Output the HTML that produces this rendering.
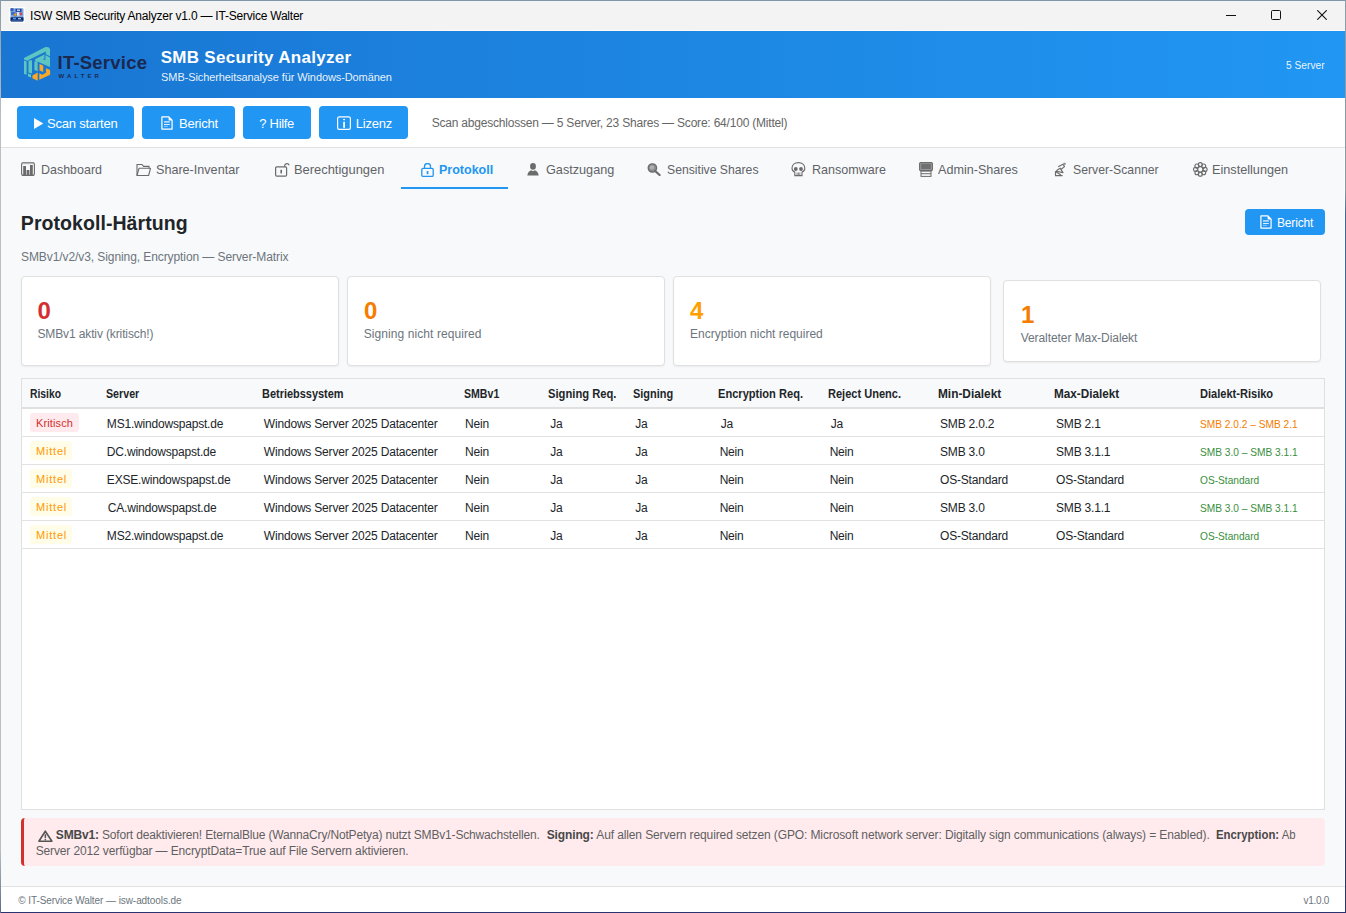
<!DOCTYPE html>
<html><head><meta charset="utf-8"><title>ISW SMB Security Analyzer</title>
<style>
html,body{margin:0;padding:0;}
body{width:1346px;height:913px;overflow:hidden;position:relative;background:#2b3270;font-family:"Liberation Sans",sans-serif;}
.a{position:absolute;}
.t{position:absolute;white-space:pre;}
</style></head><body>

<div class="a" style="left:0;top:0;width:1346px;height:1px;background:#7f97a8"></div>
<div class="a" style="left:0;top:0;width:1px;height:913px;background:linear-gradient(#8c9aa6 0px,#9aa6ae 40px,#b9bfc4 120px,#b9bfc4 850px,#5a6a8a 913px)"></div>
<div class="a" style="left:1345px;top:0;width:1px;height:913px;background:linear-gradient(#8a9ca6 0px,#8a9ca6 190px,#3b63a6 215px,#3b63a6 500px,#2b3270 800px)"></div>
<div class="a" style="left:1px;top:1px;width:1344px;height:29px;background:#f3f3f3"></div>
<div class="a" style="left:1px;top:30px;width:1344px;height:1px;background:#fbfaf7"></div>
<div class="a" style="left:1px;top:31px;width:1344px;height:67px;background:linear-gradient(90deg,#1976d2,#2196f3)"></div>
<div class="a" style="left:1px;top:98px;width:1344px;height:49px;background:#fff"></div>
<div class="a" style="left:1px;top:147px;width:1344px;height:1px;background:#e0e0e0"></div>
<div class="a" style="left:1px;top:148px;width:1343px;height:738px;background:#f8f9fa"></div>
<div class="a" style="left:1344px;top:148px;width:1px;height:738px;background:#fff"></div>
<div class="a" style="left:1px;top:886px;width:1344px;height:1px;background:#e2e2e2"></div>
<div class="a" style="left:1px;top:887px;width:1344px;height:25px;background:#fff"></div>
<!-- buttons -->
<div class="a" style="left:17px;top:106px;width:117px;height:33px;background:#2196f3;border-radius:4px"></div>
<div class="a" style="left:142px;top:106px;width:93px;height:33px;background:#2196f3;border-radius:4px"></div>
<div class="a" style="left:243px;top:106px;width:68px;height:33px;background:#2196f3;border-radius:4px"></div>
<div class="a" style="left:319px;top:106px;width:89px;height:33px;background:#2196f3;border-radius:4px"></div>
<!-- active tab underline -->
<div class="a" style="left:401px;top:187px;width:107px;height:2px;background:#2196f3"></div>
<!-- bericht btn -->
<div class="a" style="left:1245px;top:209px;width:80px;height:26px;background:#2196f3;border-radius:4px"></div>
<!-- cards -->
<div class="a" style="left:21px;top:276px;width:316px;height:88px;background:#fff;border:1px solid #e0e0e0;border-radius:4px;box-shadow:0 1px 2px rgba(0,0,0,0.06)"></div>
<div class="a" style="left:347px;top:276px;width:316px;height:88px;background:#fff;border:1px solid #e0e0e0;border-radius:4px;box-shadow:0 1px 2px rgba(0,0,0,0.06)"></div>
<div class="a" style="left:673px;top:276px;width:316px;height:88px;background:#fff;border:1px solid #e0e0e0;border-radius:4px;box-shadow:0 1px 2px rgba(0,0,0,0.06)"></div>
<div class="a" style="left:1003px;top:280px;width:316px;height:80px;background:#fff;border:1px solid #e0e0e0;border-radius:4px;box-shadow:0 1px 2px rgba(0,0,0,0.06)"></div>
<!-- table -->
<div class="a" style="left:21px;top:378px;width:1302px;height:430px;background:#fff;border:1px solid #e0e0e0"></div>
<div class="a" style="left:22px;top:379px;width:1302px;height:28px;background:#f8f9fa"></div>
<div class="a" style="left:22px;top:407px;width:1302px;height:2px;background:#e0e0e0"></div>
<div class="a" style="left:22px;top:436px;width:1302px;height:1px;background:#e2e2e2"></div>
<div class="a" style="left:22px;top:464px;width:1302px;height:1px;background:#e2e2e2"></div>
<div class="a" style="left:22px;top:492px;width:1302px;height:1px;background:#e2e2e2"></div>
<div class="a" style="left:22px;top:520px;width:1302px;height:1px;background:#e2e2e2"></div>
<div class="a" style="left:22px;top:548px;width:1302px;height:1px;background:#e2e2e2"></div>
<!-- badges -->
<div class="a" style="left:30px;top:413px;width:49px;height:19px;background:#ffebee;border-radius:3px"></div>
<div class="a" style="left:30px;top:441px;width:42px;height:19px;background:#fffde7;border-radius:3px"></div>
<div class="a" style="left:30px;top:469px;width:42px;height:19px;background:#fffde7;border-radius:3px"></div>
<div class="a" style="left:30px;top:497px;width:42px;height:19px;background:#fffde7;border-radius:3px"></div>
<div class="a" style="left:30px;top:525px;width:42px;height:19px;background:#fffde7;border-radius:3px"></div>
<!-- alert -->
<div class="a" style="left:21px;top:818px;width:1301px;height:48px;background:#ffebee;border-left:3px solid #d32f2f;border-radius:4px"></div>
<svg class="a" style="left:9px;top:7px" width="16" height="16" viewBox="0 0 16 16"><rect x="0" y="0" width="16" height="16" fill="#fdfdfd"/>
<rect x="1.5" y="1.2" width="13" height="13.2" rx="1.2" fill="#7fa8dc"/>
<rect x="1.5" y="1.2" width="3" height="3" fill="#2d5db8"/>
<rect x="6.5" y="1.8" width="6" height="3" fill="#1c3f9a"/><rect x="8" y="2.6" width="3" height="1.2" fill="#e8f0ff"/>
<rect x="2" y="5" width="4" height="3" fill="#3b6fd0"/>
<circle cx="6.3" cy="7.6" r="1.7" fill="#f2a11f" stroke="#2c5fc0" stroke-width="0.6"/>
<rect x="8" y="5.2" width="2.5" height="3.5" fill="#d8e6f7"/>
<circle cx="11.9" cy="6.7" r="1.5" fill="#c8455a"/>
<rect x="1.5" y="10.2" width="13" height="4.2" rx="0.8" fill="#102a6b"/>
<rect x="4" y="10.8" width="3" height="1.5" fill="#5d9ad9"/><rect x="9" y="11" width="3" height="1.3" fill="#9cc2ea"/>
<rect x="2.5" y="12.8" width="11" height="0.8" fill="#3f74c8"/></svg>
<svg class="a" style="left:22px;top:45px" width="32" height="38" viewBox="0 0 32 38"><g fill="#5ec6c0">
<polygon points="2,13 23.5,2 26.5,2.2 28,4 28,11.3 23.8,9.2 23.8,6.4 5,15.8 2,14.6"/>
<polygon points="13,14.3 22.4,9.6 23.8,10.3 28,12.5 28,22 13,15.6"/>
<polygon points="2,15.6 4.6,16.4 4.6,29.8 2,29"/>
<polygon points="6.5,15.6 10,15.2 10,28.6 6.5,27.6"/>
<polygon points="12.4,16.4 15.6,16 15.6,26.2 12.4,25"/>
<polygon points="6,28.6 9,29.6 9,32.4 6,31.4"/>
</g>
<path d="M22.9 9.9 V14.3 H21.2" fill="none" stroke="#1c7ad6" stroke-width="1.1"/>
<g fill="#f9a825">
<polygon points="17.5,19 21.2,20.6 21.2,27 17.5,25.5"/>
<polygon points="10.4,30.5 15.7,27.4 15.7,35.7 10.4,33.2"/>
<polygon points="17.3,28.2 20.3,29.8 24,27.8 24,23.2 28.1,25 28.1,29.8 17.3,34.8"/>
</g></svg>
<svg class="a" style="left:1226px;top:15px" width="10" height="1" viewBox="0 0 10 1"><rect x="0" y="0" width="10" height="1" fill="#111"/></svg>
<svg class="a" style="left:1271px;top:10px" width="10" height="10" viewBox="0 0 10 10"><rect x="0.5" y="0.5" width="9" height="9" rx="1" fill="none" stroke="#111" stroke-width="1"/></svg>
<svg class="a" style="left:1317px;top:10px" width="10" height="10" viewBox="0 0 10 10"><path d="M0.3 0.3 L9.7 9.7 M9.7 0.3 L0.3 9.7" stroke="#111" stroke-width="1.1"/></svg>
<svg class="a" style="left:34px;top:118px" width="10" height="11" viewBox="0 0 10 11"><polygon points="0,0 9.3,5.5 0,11" fill="#fff"/></svg>
<svg class="a" style="left:161px;top:116.2px" width="12" height="14" viewBox="0 0 12 14"><path d="M0.9 0.9 H7.9 L11.1 4.1 V13.1 H0.9 Z" fill="none" stroke="#fff" stroke-width="1.2" stroke-linejoin="round"/>
<path d="M7.6 0.6 L11.4 4.4 H7.6 Z" fill="#fff"/>
<rect x="3" y="5.2" width="5.8" height="1.4" fill="#d4e9fd"/><rect x="3" y="8" width="5.8" height="0.9" fill="#f4faff"/><rect x="3" y="9.9" width="3.8" height="0.8" fill="#a9d5f8"/></svg>
<svg class="a" style="left:1259.6px;top:215.4px" width="12" height="14" viewBox="0 0 12 14"><path d="M0.9 0.9 H7.9 L11.1 4.1 V13.1 H0.9 Z" fill="none" stroke="#fff" stroke-width="1.2" stroke-linejoin="round"/>
<path d="M7.6 0.6 L11.4 4.4 H7.6 Z" fill="#fff"/>
<rect x="3" y="5.2" width="5.8" height="1.4" fill="#d4e9fd"/><rect x="3" y="8" width="5.8" height="0.9" fill="#f4faff"/><rect x="3" y="9.9" width="3.8" height="0.8" fill="#a9d5f8"/></svg>
<svg class="a" style="left:337px;top:116px" width="14" height="14" viewBox="0 0 14 14"><rect x="0.6" y="0.9" width="12.8" height="12.4" rx="1.6" fill="none" stroke="#fff" stroke-width="1.2"/>
<rect x="6.2" y="2.9" width="1.8" height="1.3" fill="#fff"/><rect x="6.2" y="5.8" width="1.8" height="6" fill="#fff"/></svg>
<svg class="a" style="left:21px;top:162px" width="14" height="14" viewBox="0 0 14 14"><rect x="0.6" y="0.6" width="12.8" height="12.8" rx="2" fill="none" stroke="#6b6b6b" stroke-width="1.1"/>
<rect x="2" y="0.6" width="10" height="1.6" fill="#b9b9b9"/>
<rect x="2.2" y="4" width="2.8" height="9.2" fill="#6b6b6b"/><rect x="5.6" y="8" width="2.8" height="5.2" fill="#6b6b6b"/><rect x="9" y="3" width="2.8" height="10.2" fill="#6b6b6b"/></svg>
<svg class="a" style="left:136px;top:163px" width="16" height="14" viewBox="0 0 16 14"><path d="M1 12.5 V1.5 H6 L7.6 3.4 H13 V5.2" fill="none" stroke="#6b6b6b" stroke-width="1.1"/>
<path d="M1 12.5 L3 5.3 H14.5 L12.6 12.5 Z" fill="none" stroke="#6b6b6b" stroke-width="1.1" stroke-linejoin="round"/></svg>
<svg class="a" style="left:274px;top:162px" width="16" height="15" viewBox="0 0 16 15"><rect x="1.6" y="4.8" width="11" height="9.4" rx="1.2" fill="none" stroke="#6b6b6b" stroke-width="1.2"/>
<path d="M10.6 4.8 V3.6 A2.4 2.4 0 0 1 15.2 3.2" fill="none" stroke="#6b6b6b" stroke-width="1.2"/>
<rect x="6.4" y="7.8" width="1.6" height="3.6" fill="#6b6b6b"/></svg>
<svg class="a" style="left:420.5px;top:162.5px" width="13" height="14" viewBox="0 0 13 14"><rect x="0.8" y="5.4" width="11.4" height="8" rx="1.2" fill="none" stroke="#2196f3" stroke-width="1.3"/>
<path d="M3.5 5.4 V3.6 A3 3 0 0 1 9.5 3.6 V5.4" fill="none" stroke="#2196f3" stroke-width="1.3"/>
<rect x="5.7" y="8" width="1.7" height="3.2" fill="#2196f3"/></svg>
<svg class="a" style="left:526.5px;top:163px" width="13" height="13" viewBox="0 0 13 13"><ellipse cx="6" cy="3.4" rx="2.9" ry="3.3" fill="#6b6b6b"/><path d="M0.3 12.6 Q1 8.2 4.2 7.3 L6 8.2 L7.8 7.3 Q11 8.2 11.7 12.6 Z" fill="#6b6b6b"/></svg>
<svg class="a" style="left:647px;top:163px" width="14" height="13" viewBox="0 0 14 13"><circle cx="5.4" cy="5" r="4.2" fill="#8d8d8d" stroke="#6b6b6b" stroke-width="1.3"/><circle cx="5" cy="4.4" r="2.2" fill="#b0b0b0"/>
<path d="M8.2 8 L12.6 12" stroke="#6b6b6b" stroke-width="2.2" stroke-linecap="round"/></svg>
<svg class="a" style="left:791px;top:162px" width="15" height="15" viewBox="0 0 15 15"><path d="M7.4 0.6 C3.6 0.6 1 3 1 6.2 C1 8.2 2 9.4 3.8 10.1 V13.6 H11 V10.1 C12.8 9.4 13.8 8.2 13.8 6.2 C13.8 3 11.2 0.6 7.4 0.6 Z" fill="none" stroke="#6b6b6b" stroke-width="1.1"/>
<circle cx="4.8" cy="7" r="1.9" fill="#6b6b6b"/><circle cx="10" cy="7" r="1.9" fill="#6b6b6b"/>
<path d="M6 10.5 V13.6 M7.4 10.5 V13.6 M8.8 10.5 V13.6" stroke="#6b6b6b" stroke-width="0.8"/></svg>
<svg class="a" style="left:919px;top:162px" width="14" height="15" viewBox="0 0 14 15"><rect x="0.6" y="0.6" width="12.8" height="8" rx="1" fill="#9a9a9a" stroke="#6b6b6b" stroke-width="1.1"/>
<rect x="2.2" y="2" width="9.6" height="5" fill="#707070"/>
<rect x="2" y="9" width="10" height="5.4" fill="none" stroke="#6b6b6b" stroke-width="1"/>
<rect x="2" y="11.2" width="10" height="1" fill="#6b6b6b"/></svg>
<svg class="a" style="left:1054px;top:162px" width="13" height="15" viewBox="0 0 13 15"><path d="M1 13.6 H8.6 M1.5 13.6 V9.5 L7 13 M2.5 9.3 L9 10.6 L6.2 6.2 L3 8.2 Z M4.2 4.8 L9 2.2 L10.5 4.6 L7.2 7.2" fill="none" stroke="#6b6b6b" stroke-width="1.15" stroke-linejoin="round"/>
<rect x="9.4" y="0.8" width="2.2" height="2" fill="#8a8a8a"/></svg>
<svg class="a" style="left:1192.5px;top:162px" width="15" height="15" viewBox="0 0 15 15"><g fill="none" stroke="#6b6b6b" stroke-width="1.1">
<circle cx="7.3" cy="2.6" r="2"/><circle cx="7.3" cy="12.2" r="2"/><circle cx="2.5" cy="7.4" r="2"/><circle cx="12.1" cy="7.4" r="2"/>
<circle cx="3.9" cy="4" r="2"/><circle cx="10.7" cy="4" r="2"/><circle cx="3.9" cy="10.8" r="2"/><circle cx="10.7" cy="10.8" r="2"/>
<circle cx="7.3" cy="7.4" r="2.6" fill="#f8f9fa"/></g></svg>
<svg class="a" style="left:37.5px;top:829.5px" width="15" height="12" viewBox="0 0 15 12"><path d="M7.3 1.2 L13.9 11.2 H0.9 Z" fill="none" stroke="#555" stroke-width="1.6" stroke-linejoin="round"/>
<rect x="6.6" y="4.2" width="1.5" height="4" fill="#555"/><rect x="6.6" y="9" width="1.5" height="1.4" fill="#555"/></svg>
<div class="t" id="t0" style="left:30.04px;top:9.84px;font-size:12.00px;line-height:12.00px;font-weight:400;color:#000;letter-spacing:-0.224px">ISW SMB Security Analyzer v1.0 — IT-Service Walter</div>
<div class="t" id="t1" style="left:57.52px;top:53.94px;font-size:18.50px;line-height:18.50px;font-weight:700;color:#1b2850;letter-spacing:0.222px">IT-Service</div>
<div class="t" id="t2" style="left:58.52px;top:73.12px;font-size:6.00px;line-height:6.00px;font-weight:700;color:#1b2850;letter-spacing:3.100px">WALTER</div>
<div class="t" id="t3" style="left:160.64px;top:49.41px;font-size:17.00px;line-height:17.00px;font-weight:700;color:#fff;letter-spacing:0.300px">SMB Security Analyzer</div>
<div class="t" id="t4" style="left:161.12px;top:71.59px;font-size:11.00px;line-height:11.00px;font-weight:400;color:rgba(255,255,255,0.92);letter-spacing:-0.098px">SMB-Sicherheitsanalyse für Windows-Domänen</div>
<div class="t" id="t5" style="left:1285.92px;top:59.79px;font-size:11.00px;line-height:11.00px;font-weight:400;color:rgba(255,255,255,0.92);transform:scaleX(0.9286);transform-origin:0 0">5 Server</div>
<div class="t" id="t6" style="left:46.96px;top:116.80px;font-size:13.00px;line-height:13.00px;font-weight:400;color:#fff;letter-spacing:-0.200px">Scan starten</div>
<div class="t" id="t7" style="left:178.96px;top:116.80px;font-size:13.00px;line-height:13.00px;font-weight:400;color:#fff;letter-spacing:-0.217px">Bericht</div>
<div class="t" id="t8" style="left:259.36px;top:116.80px;font-size:13.00px;line-height:13.00px;font-weight:400;color:#fff;letter-spacing:-0.317px">? Hilfe</div>
<div class="t" id="t9" style="left:355.76px;top:116.80px;font-size:13.00px;line-height:13.00px;font-weight:400;color:#fff;letter-spacing:-0.240px">Lizenz</div>
<div class="t" id="t10" style="left:431.64px;top:117.24px;font-size:12.00px;line-height:12.00px;font-weight:400;color:#666;letter-spacing:-0.203px">Scan abgeschlossen — 5 Server, 23 Shares — Score: 64/100 (Mittel)</div>
<div class="t" id="t11" style="left:40.92px;top:162.57px;font-size:13.50px;line-height:13.50px;font-weight:400;color:#5f6368;transform:scaleX(0.9233);transform-origin:0 0">Dashboard</div>
<div class="t" id="t12" style="left:155.92px;top:162.57px;font-size:13.50px;line-height:13.50px;font-weight:400;color:#5f6368;transform:scaleX(0.9333);transform-origin:0 0">Share-Inventar</div>
<div class="t" id="t13" style="left:294.32px;top:162.57px;font-size:13.50px;line-height:13.50px;font-weight:400;color:#5f6368;transform:scaleX(0.9555);transform-origin:0 0">Berechtigungen</div>
<div class="t" id="t14" style="left:438.92px;top:162.57px;font-size:13.50px;line-height:13.50px;font-weight:700;color:#2196f3;transform:scaleX(0.9268);transform-origin:0 0">Protokoll</div>
<div class="t" id="t15" style="left:545.92px;top:162.57px;font-size:13.50px;line-height:13.50px;font-weight:400;color:#5f6368;transform:scaleX(0.9380);transform-origin:0 0">Gastzugang</div>
<div class="t" id="t16" style="left:666.72px;top:162.57px;font-size:13.50px;line-height:13.50px;font-weight:400;color:#5f6368;transform:scaleX(0.9031);transform-origin:0 0">Sensitive Shares</div>
<div class="t" id="t17" style="left:811.72px;top:162.57px;font-size:13.50px;line-height:13.50px;font-weight:400;color:#5f6368;transform:scaleX(0.9295);transform-origin:0 0">Ransomware</div>
<div class="t" id="t18" style="left:938.12px;top:162.57px;font-size:13.50px;line-height:13.50px;font-weight:400;color:#5f6368;transform:scaleX(0.9340);transform-origin:0 0">Admin-Shares</div>
<div class="t" id="t19" style="left:1072.72px;top:162.57px;font-size:13.50px;line-height:13.50px;font-weight:400;color:#5f6368;transform:scaleX(0.9055);transform-origin:0 0">Server-Scanner</div>
<div class="t" id="t20" style="left:1212.12px;top:162.57px;font-size:13.50px;line-height:13.50px;font-weight:400;color:#5f6368;transform:scaleX(0.9390);transform-origin:0 0">Einstellungen</div>
<div class="t" id="t21" style="left:20.84px;top:214.49px;font-size:19.50px;line-height:19.50px;font-weight:700;color:#212529;letter-spacing:0.062px">Protokoll-Härtung</div>
<div class="t" id="t22" style="left:21.04px;top:251.04px;font-size:12.00px;line-height:12.00px;font-weight:400;color:#6c757d;letter-spacing:-0.085px">SMBv1/v2/v3, Signing, Encryption — Server-Matrix</div>
<div class="t" id="t23" style="left:1277.04px;top:216.54px;font-size:12.00px;line-height:12.00px;font-weight:400;color:#fff;letter-spacing:-0.183px">Bericht</div>
<div class="t" id="t24" style="left:37.48px;top:298.68px;font-size:24.00px;line-height:24.00px;font-weight:700;color:#d32f2f">0</div>
<div class="t" id="t25" style="left:37.44px;top:327.84px;font-size:12.00px;line-height:12.00px;font-weight:400;color:#6c757d;letter-spacing:-0.123px">SMBv1 aktiv (kritisch!)</div>
<div class="t" id="t26" style="left:363.88px;top:298.68px;font-size:24.00px;line-height:24.00px;font-weight:700;color:#f57c00">0</div>
<div class="t" id="t27" style="left:363.64px;top:327.84px;font-size:12.00px;line-height:12.00px;font-weight:400;color:#6c757d;letter-spacing:0.086px">Signing nicht required</div>
<div class="t" id="t28" style="left:690.08px;top:298.68px;font-size:24.00px;line-height:24.00px;font-weight:700;color:#ffa000">4</div>
<div class="t" id="t29" style="left:690.04px;top:327.84px;font-size:12.00px;line-height:12.00px;font-weight:400;color:#6c757d">Encryption nicht required</div>
<div class="t" id="t30" style="left:1020.88px;top:302.88px;font-size:24.00px;line-height:24.00px;font-weight:700;color:#f57c00">1</div>
<div class="t" id="t31" style="left:1020.64px;top:331.74px;font-size:12.00px;line-height:12.00px;font-weight:400;color:#6c757d;letter-spacing:-0.062px">Veralteter Max-Dialekt</div>
<div class="t" id="t32" style="left:30.00px;top:387.82px;font-size:12.50px;line-height:12.50px;font-weight:700;color:#212529;transform:scaleX(0.8268);transform-origin:0 0">Risiko</div>
<div class="t" id="t33" style="left:105.80px;top:387.82px;font-size:12.50px;line-height:12.50px;font-weight:700;color:#212529;transform:scaleX(0.8543);transform-origin:0 0">Server</div>
<div class="t" id="t34" style="left:261.60px;top:387.82px;font-size:12.50px;line-height:12.50px;font-weight:700;color:#212529;transform:scaleX(0.8756);transform-origin:0 0">Betriebssystem</div>
<div class="t" id="t35" style="left:463.80px;top:387.82px;font-size:12.50px;line-height:12.50px;font-weight:700;color:#212529;transform:scaleX(0.8464);transform-origin:0 0">SMBv1</div>
<div class="t" id="t36" style="left:548.00px;top:387.82px;font-size:12.50px;line-height:12.50px;font-weight:700;color:#212529;transform:scaleX(0.8966);transform-origin:0 0">Signing Req.</div>
<div class="t" id="t37" style="left:633.20px;top:387.82px;font-size:12.50px;line-height:12.50px;font-weight:700;color:#212529;transform:scaleX(0.8772);transform-origin:0 0">Signing</div>
<div class="t" id="t38" style="left:718.20px;top:387.82px;font-size:12.50px;line-height:12.50px;font-weight:700;color:#212529;transform:scaleX(0.8866);transform-origin:0 0">Encryption Req.</div>
<div class="t" id="t39" style="left:828.00px;top:387.82px;font-size:12.50px;line-height:12.50px;font-weight:700;color:#212529;transform:scaleX(0.8834);transform-origin:0 0">Reject Unenc.</div>
<div class="t" id="t40" style="left:938.00px;top:387.82px;font-size:12.50px;line-height:12.50px;font-weight:700;color:#212529;transform:scaleX(0.9483);transform-origin:0 0">Min-Dialekt</div>
<div class="t" id="t41" style="left:1054.00px;top:387.82px;font-size:12.50px;line-height:12.50px;font-weight:700;color:#212529;transform:scaleX(0.9397);transform-origin:0 0">Max-Dialekt</div>
<div class="t" id="t42" style="left:1200.00px;top:387.82px;font-size:12.50px;line-height:12.50px;font-weight:700;color:#212529;transform:scaleX(0.8846);transform-origin:0 0">Dialekt-Risiko</div>
<div class="t" id="t43" style="left:35.92px;top:417.69px;font-size:11.00px;line-height:11.00px;font-weight:400;color:#d32f2f;letter-spacing:0.143px">Kritisch</div>
<div class="t" id="t44" style="left:106.84px;top:417.54px;font-size:12.00px;line-height:12.00px;font-weight:400;color:#212529;letter-spacing:-0.193px">MS1.windowspapst.de</div>
<div class="t" id="t45" style="left:263.84px;top:417.54px;font-size:12.00px;line-height:12.00px;font-weight:400;color:#212529;letter-spacing:-0.193px">Windows Server 2025 Datacenter</div>
<div class="t" id="t46" style="left:465.04px;top:417.54px;font-size:12.00px;line-height:12.00px;font-weight:400;color:#212529;letter-spacing:-0.193px">Nein</div>
<div class="t" id="t47" style="left:550.24px;top:417.54px;font-size:12.00px;line-height:12.00px;font-weight:400;color:#212529;letter-spacing:-0.193px">Ja</div>
<div class="t" id="t48" style="left:635.24px;top:417.54px;font-size:12.00px;line-height:12.00px;font-weight:400;color:#212529;letter-spacing:-0.193px">Ja</div>
<div class="t" id="t49" style="left:720.64px;top:417.54px;font-size:12.00px;line-height:12.00px;font-weight:400;color:#212529;letter-spacing:-0.193px">Ja</div>
<div class="t" id="t50" style="left:830.64px;top:417.54px;font-size:12.00px;line-height:12.00px;font-weight:400;color:#212529;letter-spacing:-0.193px">Ja</div>
<div class="t" id="t51" style="left:940.04px;top:417.54px;font-size:12.00px;line-height:12.00px;font-weight:400;color:#212529;letter-spacing:-0.193px">SMB 2.0.2</div>
<div class="t" id="t52" style="left:1056.04px;top:417.54px;font-size:12.00px;line-height:12.00px;font-weight:400;color:#212529;letter-spacing:-0.193px">SMB 2.1</div>
<div class="t" id="t53" style="left:1200.32px;top:418.59px;font-size:11.00px;line-height:11.00px;font-weight:400;color:#f57c00;transform:scaleX(0.9229);transform-origin:0 0">SMB 2.0.2 – SMB 2.1</div>
<div class="t" id="t54" style="left:35.92px;top:445.69px;font-size:11.00px;line-height:11.00px;font-weight:400;color:#ff9800;letter-spacing:0.820px">Mittel</div>
<div class="t" id="t55" style="left:106.84px;top:445.54px;font-size:12.00px;line-height:12.00px;font-weight:400;color:#212529;letter-spacing:-0.193px">DC.windowspapst.de</div>
<div class="t" id="t56" style="left:263.84px;top:445.54px;font-size:12.00px;line-height:12.00px;font-weight:400;color:#212529;letter-spacing:-0.193px">Windows Server 2025 Datacenter</div>
<div class="t" id="t57" style="left:465.04px;top:445.54px;font-size:12.00px;line-height:12.00px;font-weight:400;color:#212529;letter-spacing:-0.193px">Nein</div>
<div class="t" id="t58" style="left:550.24px;top:445.54px;font-size:12.00px;line-height:12.00px;font-weight:400;color:#212529;letter-spacing:-0.193px">Ja</div>
<div class="t" id="t59" style="left:635.24px;top:445.54px;font-size:12.00px;line-height:12.00px;font-weight:400;color:#212529;letter-spacing:-0.193px">Ja</div>
<div class="t" id="t60" style="left:719.64px;top:445.54px;font-size:12.00px;line-height:12.00px;font-weight:400;color:#212529;letter-spacing:-0.193px">Nein</div>
<div class="t" id="t61" style="left:829.64px;top:445.54px;font-size:12.00px;line-height:12.00px;font-weight:400;color:#212529;letter-spacing:-0.193px">Nein</div>
<div class="t" id="t62" style="left:940.04px;top:445.54px;font-size:12.00px;line-height:12.00px;font-weight:400;color:#212529;letter-spacing:-0.193px">SMB 3.0</div>
<div class="t" id="t63" style="left:1056.04px;top:445.54px;font-size:12.00px;line-height:12.00px;font-weight:400;color:#212529;letter-spacing:-0.193px">SMB 3.1.1</div>
<div class="t" id="t64" style="left:1200.32px;top:446.59px;font-size:11.00px;line-height:11.00px;font-weight:400;color:#388e3c;transform:scaleX(0.9229);transform-origin:0 0">SMB 3.0 – SMB 3.1.1</div>
<div class="t" id="t65" style="left:35.92px;top:473.69px;font-size:11.00px;line-height:11.00px;font-weight:400;color:#ff9800;letter-spacing:0.820px">Mittel</div>
<div class="t" id="t66" style="left:106.84px;top:473.54px;font-size:12.00px;line-height:12.00px;font-weight:400;color:#212529;letter-spacing:-0.193px">EXSE.windowspapst.de</div>
<div class="t" id="t67" style="left:263.84px;top:473.54px;font-size:12.00px;line-height:12.00px;font-weight:400;color:#212529;letter-spacing:-0.193px">Windows Server 2025 Datacenter</div>
<div class="t" id="t68" style="left:465.04px;top:473.54px;font-size:12.00px;line-height:12.00px;font-weight:400;color:#212529;letter-spacing:-0.193px">Nein</div>
<div class="t" id="t69" style="left:550.24px;top:473.54px;font-size:12.00px;line-height:12.00px;font-weight:400;color:#212529;letter-spacing:-0.193px">Ja</div>
<div class="t" id="t70" style="left:635.24px;top:473.54px;font-size:12.00px;line-height:12.00px;font-weight:400;color:#212529;letter-spacing:-0.193px">Ja</div>
<div class="t" id="t71" style="left:719.64px;top:473.54px;font-size:12.00px;line-height:12.00px;font-weight:400;color:#212529;letter-spacing:-0.193px">Nein</div>
<div class="t" id="t72" style="left:829.64px;top:473.54px;font-size:12.00px;line-height:12.00px;font-weight:400;color:#212529;letter-spacing:-0.193px">Nein</div>
<div class="t" id="t73" style="left:940.04px;top:473.54px;font-size:12.00px;line-height:12.00px;font-weight:400;color:#212529;letter-spacing:-0.193px">OS-Standard</div>
<div class="t" id="t74" style="left:1056.04px;top:473.54px;font-size:12.00px;line-height:12.00px;font-weight:400;color:#212529;letter-spacing:-0.193px">OS-Standard</div>
<div class="t" id="t75" style="left:1200.32px;top:474.59px;font-size:11.00px;line-height:11.00px;font-weight:400;color:#388e3c;transform:scaleX(0.9229);transform-origin:0 0">OS-Standard</div>
<div class="t" id="t76" style="left:35.92px;top:501.69px;font-size:11.00px;line-height:11.00px;font-weight:400;color:#ff9800;letter-spacing:0.820px">Mittel</div>
<div class="t" id="t77" style="left:107.84px;top:501.54px;font-size:12.00px;line-height:12.00px;font-weight:400;color:#212529;letter-spacing:-0.193px">CA.windowspapst.de</div>
<div class="t" id="t78" style="left:263.84px;top:501.54px;font-size:12.00px;line-height:12.00px;font-weight:400;color:#212529;letter-spacing:-0.193px">Windows Server 2025 Datacenter</div>
<div class="t" id="t79" style="left:465.04px;top:501.54px;font-size:12.00px;line-height:12.00px;font-weight:400;color:#212529;letter-spacing:-0.193px">Nein</div>
<div class="t" id="t80" style="left:550.24px;top:501.54px;font-size:12.00px;line-height:12.00px;font-weight:400;color:#212529;letter-spacing:-0.193px">Ja</div>
<div class="t" id="t81" style="left:635.24px;top:501.54px;font-size:12.00px;line-height:12.00px;font-weight:400;color:#212529;letter-spacing:-0.193px">Ja</div>
<div class="t" id="t82" style="left:719.64px;top:501.54px;font-size:12.00px;line-height:12.00px;font-weight:400;color:#212529;letter-spacing:-0.193px">Nein</div>
<div class="t" id="t83" style="left:829.64px;top:501.54px;font-size:12.00px;line-height:12.00px;font-weight:400;color:#212529;letter-spacing:-0.193px">Nein</div>
<div class="t" id="t84" style="left:940.04px;top:501.54px;font-size:12.00px;line-height:12.00px;font-weight:400;color:#212529;letter-spacing:-0.193px">SMB 3.0</div>
<div class="t" id="t85" style="left:1056.04px;top:501.54px;font-size:12.00px;line-height:12.00px;font-weight:400;color:#212529;letter-spacing:-0.193px">SMB 3.1.1</div>
<div class="t" id="t86" style="left:1200.32px;top:502.59px;font-size:11.00px;line-height:11.00px;font-weight:400;color:#388e3c;transform:scaleX(0.9229);transform-origin:0 0">SMB 3.0 – SMB 3.1.1</div>
<div class="t" id="t87" style="left:35.92px;top:529.69px;font-size:11.00px;line-height:11.00px;font-weight:400;color:#ff9800;letter-spacing:0.820px">Mittel</div>
<div class="t" id="t88" style="left:106.84px;top:529.54px;font-size:12.00px;line-height:12.00px;font-weight:400;color:#212529;letter-spacing:-0.193px">MS2.windowspapst.de</div>
<div class="t" id="t89" style="left:263.84px;top:529.54px;font-size:12.00px;line-height:12.00px;font-weight:400;color:#212529;letter-spacing:-0.193px">Windows Server 2025 Datacenter</div>
<div class="t" id="t90" style="left:465.04px;top:529.54px;font-size:12.00px;line-height:12.00px;font-weight:400;color:#212529;letter-spacing:-0.193px">Nein</div>
<div class="t" id="t91" style="left:550.24px;top:529.54px;font-size:12.00px;line-height:12.00px;font-weight:400;color:#212529;letter-spacing:-0.193px">Ja</div>
<div class="t" id="t92" style="left:635.24px;top:529.54px;font-size:12.00px;line-height:12.00px;font-weight:400;color:#212529;letter-spacing:-0.193px">Ja</div>
<div class="t" id="t93" style="left:719.64px;top:529.54px;font-size:12.00px;line-height:12.00px;font-weight:400;color:#212529;letter-spacing:-0.193px">Nein</div>
<div class="t" id="t94" style="left:829.64px;top:529.54px;font-size:12.00px;line-height:12.00px;font-weight:400;color:#212529;letter-spacing:-0.193px">Nein</div>
<div class="t" id="t95" style="left:940.04px;top:529.54px;font-size:12.00px;line-height:12.00px;font-weight:400;color:#212529;letter-spacing:-0.193px">OS-Standard</div>
<div class="t" id="t96" style="left:1056.04px;top:529.54px;font-size:12.00px;line-height:12.00px;font-weight:400;color:#212529;letter-spacing:-0.193px">OS-Standard</div>
<div class="t" id="t97" style="left:1200.32px;top:530.59px;font-size:11.00px;line-height:11.00px;font-weight:400;color:#388e3c;transform:scaleX(0.9229);transform-origin:0 0">OS-Standard</div>
<div class="t" id="t98" style="left:55.84px;top:828.94px;font-size:12.00px;line-height:12.00px;font-weight:400;color:#5f5f5f;letter-spacing:-0.169px"><b style="color:#484848">SMBv1:</b> Sofort deaktivieren! EternalBlue (WannaCry/NotPetya) nutzt SMBv1-Schwachstellen.</div>
<div class="t" id="t99" style="left:546.64px;top:828.94px;font-size:12.00px;line-height:12.00px;font-weight:400;color:#5f5f5f;letter-spacing:-0.114px"><b style="color:#484848">Signing:</b> Auf allen Servern required setzen (GPO: Microsoft network server: Digitally sign communications (always) = Enabled).</div>
<div class="t" id="t100" style="left:1216.24px;top:828.94px;font-size:12.00px;line-height:12.00px;font-weight:400;color:#5f5f5f;transform:scaleX(0.9473);transform-origin:0 0"><b style="color:#484848">Encryption:</b> Ab</div>
<div class="t" id="t101" style="left:35.64px;top:844.94px;font-size:12.00px;line-height:12.00px;font-weight:400;color:#5f5f5f;letter-spacing:-0.125px">Server 2012 verfügbar — EncryptData=True auf File Servern aktivieren.</div>
<div class="t" id="t102" style="left:18.20px;top:896.13px;font-size:10.00px;line-height:10.00px;font-weight:400;color:#6c757d;letter-spacing:-0.071px">© IT-Service Walter — isw-adtools.de</div>
<div class="t" id="t103" style="left:1303.60px;top:895.63px;font-size:10.00px;line-height:10.00px;font-weight:400;color:#6c757d;letter-spacing:-0.280px">v1.0.0</div>
</body></html>
